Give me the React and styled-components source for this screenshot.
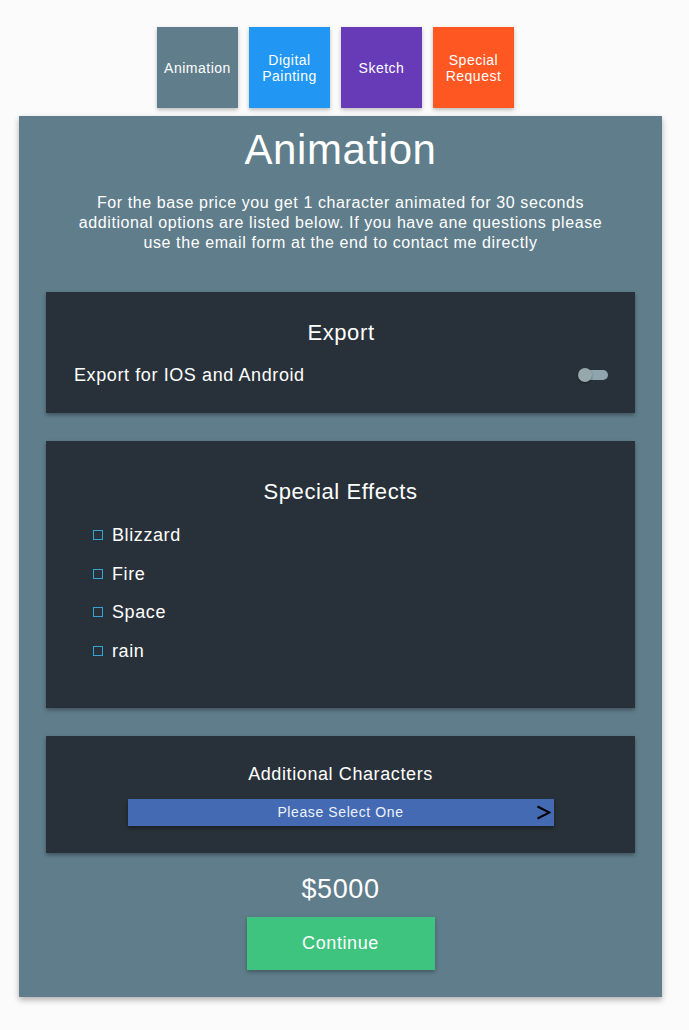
import React, { useState } from 'react'
import styled, { createGlobalStyle } from 'styled-components'

const GlobalStyle = createGlobalStyle`
  html, body {
    margin: 0;
    padding: 0;
    background: #fbfbfb;
    font-family: "Liberation Sans", Arial, Helvetica, sans-serif;
    color: #fff;
    letter-spacing: 0.6px;
  }
`

const Page = styled.div`
  width: 689px;
  min-height: 1030px;
  padding-top: 27px;
  box-sizing: border-box;
`

const TabRow = styled.div`
  display: flex;
  justify-content: center;
  gap: 11px;
  padding-right: 18px;
`

const Tab = styled.button`
  width: 81px;
  height: 81px;
  border: none;
  padding: 0 2px;
  background: ${p => p.color};
  color: #fff;
  font-family: inherit;
  letter-spacing: 0.5px;
  font-size: 14px;
  line-height: 16px;
  box-shadow: 0 2px 4px rgba(0, 0, 0, 0.25);
  cursor: pointer;
`

const Card = styled.section`
  margin: 8px 0 0 19px;
  width: 643px;
  background: #607d8b;
  padding: 10px 27px 27px 27px;
  box-sizing: border-box;
  box-shadow: 0 3px 6px rgba(0, 0, 0, 0.3);
  display: flex;
  flex-direction: column;
  align-items: center;
`

const Title = styled.h1`
  margin: 0;
  font-size: 42px;
  line-height: 48px;
  font-weight: normal;
`

const Intro = styled.p`
  margin: 19px 0 39px;
  width: 548px;
  font-size: 16px;
  line-height: 20px;
  text-align: center;
`

const Panel = styled.div`
  width: 100%;
  background: #283139;
  box-shadow: 0 2px 4px rgba(0, 0, 0, 0.35);
  padding: ${p => p.pad};
  box-sizing: border-box;
  margin-bottom: 28px;
  display: flex;
  flex-direction: column;
`

const PanelTitle = styled.h2`
  margin: 0;
  font-weight: normal;
  font-size: ${p => p.size || 22}px;
  line-height: ${p => (p.size || 22) + 4}px;
  text-align: center;
`

const OptionRow = styled.label`
  margin-top: 18px;
  display: flex;
  align-items: center;
  justify-content: space-between;
  font-size: 18px;
  line-height: 22px;
`

const Toggle = styled.span`
  position: relative;
  width: 30px;
  height: 14px;
  display: block;

  &::before {
    content: '';
    position: absolute;
    left: 5px;
    right: 0;
    top: 2px;
    height: 10px;
    border-radius: 5px;
    background: #90a4ae;
  }

  &::after {
    content: '';
    position: absolute;
    left: 0;
    top: 0;
    width: 14px;
    height: 14px;
    border-radius: 50%;
    background: #97a8ac;
    box-shadow: 0 1px 2px rgba(0, 0, 0, 0.4);
  }
`

const EffectList = styled.ul`
  list-style: none;
  margin: 19px 0 0;
  padding: 0 0 0 19px;
  display: flex;
  flex-direction: column;
  gap: 16.5px;
`

const Effect = styled.li`
  display: flex;
  align-items: center;
  gap: 9px;
  font-size: 18px;
  line-height: 22px;
`

const Box = styled.span`
  width: 8px;
  height: 8px;
  border: 1px solid #2fa6d6;
  display: inline-block;
`

const Select = styled.div`
  margin: 14px auto 0;
  width: 426px;
  height: 27px;
  background: #436ab2;
  box-shadow: 0 2px 4px rgba(0, 0, 0, 0.4);
  display: flex;
  align-items: center;
  justify-content: center;
  position: relative;
  font-size: 14px;
  color: #eef2fa;
`

const Chevron = styled.svg`
  position: absolute;
  right: 3px;
  top: 6px;
`

const Price = styled.div`
  margin-top: -7px;
  font-size: 27px;
  line-height: 30px;
`

const Continue = styled.button`
  margin-top: 13px;
  width: 188px;
  height: 53px;
  border: none;
  background: #3ec47e;
  color: #fff;
  font-family: inherit;
  letter-spacing: 0.6px;
  font-size: 18px;
  box-shadow: 0 2px 4px rgba(0, 0, 0, 0.3);
  cursor: pointer;
`

const tabs = [
  { label: 'Animation', color: '#607d8b' },
  { label: 'Digital Painting', color: '#2196f3' },
  { label: 'Sketch', color: '#673ab7' },
  { label: 'Special Request', color: '#ff5722' }
]

const effects = ['Blizzard', 'Fire', 'Space', 'rain']

export default function App () {
  const [active, setActive] = useState('Animation')
  return (
    <Page>
      <GlobalStyle />
      <TabRow>
        {tabs.map(t => (
          <Tab key={t.label} color={t.color} onClick={() => setActive(t.label)}>{t.label}</Tab>
        ))}
      </TabRow>
      <Card>
        <Title>{active}</Title>
        <Intro>
          For the base price you get 1 character animated for 30 seconds additional options are listed below. If you have ane questions please use the email form at the end to contact me directly
        </Intro>
        <Panel pad='28px 27px 27px 28px'>
          <PanelTitle>Export</PanelTitle>
          <OptionRow>
            Export for IOS and Android
            <Toggle />
          </OptionRow>
        </Panel>
        <Panel pad='38px 28px 46px 28px'>
          <PanelTitle>Special Effects</PanelTitle>
          <EffectList>
            {effects.map(e => (
              <Effect key={e}><Box />{e}</Effect>
            ))}
          </EffectList>
        </Panel>
        <Panel pad='27px 28px 27px 28px'>
          <PanelTitle size={18}>Additional Characters</PanelTitle>
          <Select>
            Please Select One
            <Chevron width='15' height='15' viewBox='0 0 15 15'>
              <path d='M1.5 1.5 L13.5 7.5 L1.5 13.5' fill='none' stroke='#000' strokeWidth='2' />
            </Chevron>
          </Select>
        </Panel>
        <Price>$5000</Price>
        <Continue>Continue</Continue>
      </Card>
    </Page>
  )
}
